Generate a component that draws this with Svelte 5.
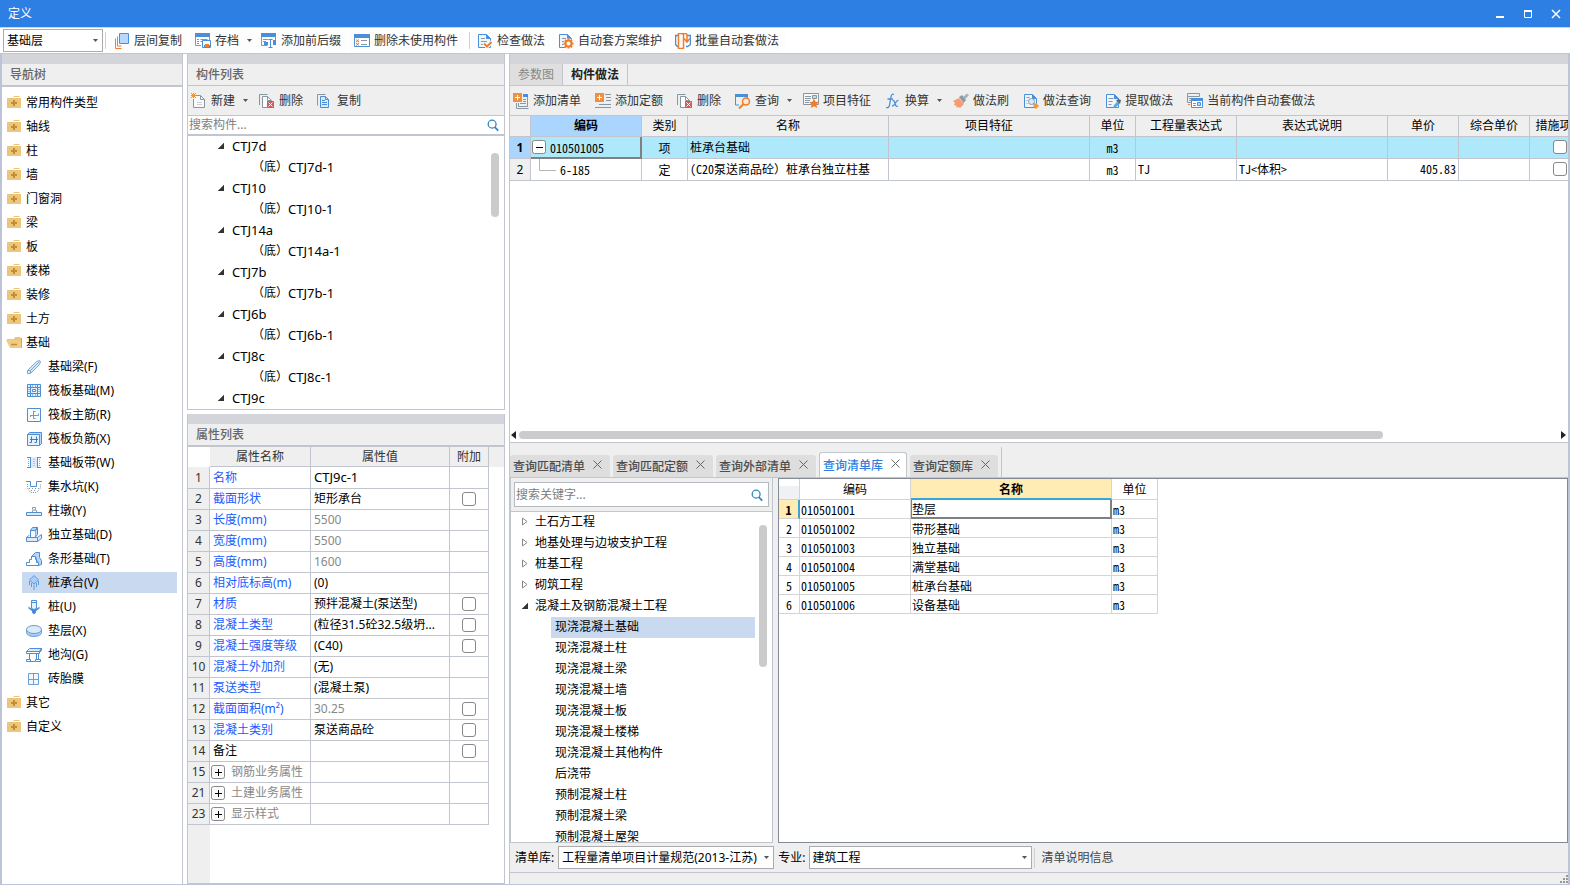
<script>
  const B = '#4a8fd8';
  const G = '#8797a2';
  const O = '#f07d2b';
  const doc = (c, x = 1.5) => `<path d="M${x} 1.5h8l4 4v9h-12z" fill="#eef5fd" stroke="${c}"/><path d="M${x + 8} 1.5v4h4" fill="${c}" stroke="${c}"/>`;
  const redX = '<path d="M8 8h7v7H8z" fill="#d9585a"/><path d="M9.5 9.5l4 4M13.5 9.5l-4 4" stroke="#fff"/>';
  const plusBox = '<path d="M0 0h9v9H0z" fill="#ef8f3f"/><path d="M2 4.5h5M4.5 2v5" stroke="#fff"/>';

  const icons = {
    layers: `<path d="M1.500 5.500v10h6M3.500 3.500v9.500h4" fill="none" stroke="${O}"/><path d="M5.500.5h9v10h-9z" fill="#b8d8ff" stroke="${B}"/>`,
    archive: `<path d="M.5 4v8.500H6" fill="none" stroke="${G}"/><path d="M0 0h15v4H0z" fill="${B}"/><path d="M14.500 4v3" stroke="${G}"/><path d="M2 6.500h2M5.500 6.500h7M2 8.500h2M5.500 8.500h2M2 10.500h2" stroke="${G}"/><path d="M7.500 7.500h8v7h-8z" fill="#fff" stroke="${B}"/><path d="M9 12h2v3H9zM13 12h2v3h-2z" fill="${B}"/><path d="M10 11h4v3h-4z" fill="${O}"/>`,
    affix: `<path d="M0 0h15v4H0z" fill="${B}"/><path d="M.5 4v8.500h6M14.500 4v4" fill="none" stroke="${G}"/><path d="M2 6.500h5M2 8.500h3" stroke="${G}"/><path d="M3 9h4v3H3zM12 7h3v5h-3z" fill="${B}"/><path d="M7.500 6.500h4M9.500 6.500v8M7.500 14.500h4" stroke="${B}"/>`,
    listx: `<path d="M.5 1.500h15v12H.5z" fill="#fff" stroke="${B}"/><path d="M0 1h16v4H0z" fill="${B}"/><path d="M2 6.500l3 2.500M5 6.500L2 9M2 10l3 2.500M5 10l-3 2.500" stroke="${O}"/><path d="M7 7.500h6M7 11.500h6" stroke="${G}"/>`,
    check: `${doc(B)}<path d="M4 5.500h4M4 8.500h6M4 11.500h3" stroke="${G}"/><path d="M7 10l3 3.500L15 9" fill="none" stroke="#fff" stroke-width="4"/><path d="M7 10.500l3 3L14.500 9" fill="none" stroke="${O}" stroke-width="2"/>`,
    gear: `${doc(B)}<path d="M4 5.500h4M4 8.500h3M4 11.500h2" stroke="${G}"/><circle cx="10.500" cy="10.500" r="5" fill="#fff"/><circle cx="10.500" cy="10.500" r="3" fill="none" stroke="${O}" stroke-width="2"/><path d="M10.500 5.500v2M10.500 13.500v2M5.500 10.500h2M13.500 10.500h2M7 7l1.500 1.500M12.500 12.500L14 14M14 7l-1.500 1.500M8.500 12.500L7 14" stroke="${O}" stroke-width="2"/>`,
    batch: `<path d="M4 2.500H.5v9l2 2H4M12 2.500h3.500v9l-3 2H11" fill="none" stroke="${B}" stroke-width="1.500"/><path d="M3.500 15.500V.5h5v15z" fill="#fff" stroke="${O}" stroke-width="1.500"/><path d="M6 .5h4.500q1.500 0 1.500 2V8M9 5.500L12 9l3-3.500" fill="none" stroke="${O}" stroke-width="1.500"/>`,
    create: `<path d="M3.500 2.500h6l4 4v8h-11V6" fill="#fafafa" stroke="${G}"/><path d="M9.500 2.500v4h4" fill="none" stroke="${G}"/><path d="M6 9.500h5M6 11.500h5" stroke="#c9d0d5"/><path d="M0 0l5 5M5 0L0 5M2.500 0v5M0 2.500h5" stroke="#f0992b"/>`,
    remove: `<path d="M.5 12V1.500h8" fill="none" stroke="${G}"/><path d="M3.500 3.500h5l4 4v7h-9z" fill="#fff" stroke="${G}"/><path d="M8.500 3.500v4h4" fill="none" stroke="${G}"/>${redX}`,
    copy: `<path d="M.5 12.500V1.500h8" fill="none" stroke="${G}"/><path d="M3.500 3.500h5l3 3v8h-8z" fill="#dbeafb" stroke="${B}"/><path d="M8.500 3.500v3h3" fill="none" stroke="${B}"/><path d="M5 7.500h3M5 9.500h5M5 11.500h5" stroke="${B}"/>`,
    addlist: `<path d="M10 1h5v3h-5z" fill="${B}"/><path d="M14.500 4v9.500M3.500 10v5.500h12M5.500 10v3.500h9" fill="none" stroke="${G}"/><path d="M10 6.500h3M10 8.500h3M7 10.500h6" stroke="${G}"/>${plusBox}`,
    addquota: `<path d="M10 1.500h6M11 4.500h5M11 7.500h5M4 11.500h12M0 14.500h16" stroke="${G}"/>${plusBox}`,
    query: `<path d="M4 12H.5V2M0 2h13M12.500 1v4" fill="none" stroke="${B}"/><path d="M0 1h13v3H0z" fill="${B}"/><circle cx="11" cy="8.500" r="3.500" fill="#fde8d6" stroke="${O}" stroke-width="1.500"/><path d="M8.500 11L4 15.500" stroke="${O}" stroke-width="2"/>`,
    feature: `<path d="M.5.5h15v11H.5z" fill="#f8f8f8" stroke="${G}"/><path d="M2 3.500h6M2 5.500h6M2 7.500h5M2 9.500h4" stroke="${G}"/><path d="M9.500 2.500h4v3h-4z" fill="#cfd6db" stroke="${G}"/><path d="M11 5.500l1.500 3.200 3.500.4-2.600 2.300.7 3.600-3.100-1.800-3.100 1.800.7-3.600L6 9.100l3.500-.4z" fill="${O}"/>`,
    fx: `<path d="M9 1.500Q6.500 0 6 4L4.500 12Q4 15.500 1 14.500M2.500 6H8" fill="none" stroke="${B}" stroke-width="1.300"/><path d="M7.500 7.500Q9 7 9.500 9l1 3q.7 2 2.500 1M13.500 7.500Q12 7 10.500 10T7 13" fill="none" stroke="${B}" stroke-width="1.300"/>`,
    brush: `<path d="M0 8l6-3 5 6-4 4-2-1-1.500 1v-2L1 12l1-2z" fill="#f79c72"/><path d="M6 4l3-2 4 5-2.500 3z" fill="#8d9aa3"/><path d="M10 4l4-3.500L16 2l-3.500 4z" fill="#a9b3ba"/>`,
    docquery: `${doc(B)}<path d="M3.500 4.500h3M3.500 7.500h1M3.500 10.500h1" stroke="${G}"/><circle cx="8.500" cy="8.500" r="3" fill="#dbeafb" stroke="${G}"/><path d="M10.500 10.500l2 2" stroke="${G}" stroke-width="1.500"/><path d="M13 10l3 3-3 3-3-3z" fill="#f39a2e"/>`,
    extract: `${doc(B)}<path d="M3.500 5.500h5M3.500 8.500h4M3.500 11.500h3" stroke="${G}"/><path d="M8 15l1-3 4-4 2 2-4 4z" fill="#5aa9d8"/><path d="M11 8l2-2 3 1-1 4-2-2z" fill="#5c6870"/>`,
    current: `<path d="M.5.5h12v3H.5zM.5 3.500v6H4M2 5.500h2M2 7.500h2" fill="none" stroke="${G}"/><path d="M4.500 5.500h11v9h-11z" fill="#fff" stroke="${B}"/><path d="M4 5h12v3H4z" fill="${B}"/><path d="M6 10.500h3M6 12.500h3" stroke="${G}"/><path d="M10.500 9.500h3v3h-3z" fill="#b8d8ff" stroke="${B}"/><path d="M1 11.500h2" stroke="${O}"/>`,
    folder: `<path d="M8 1h5l1 1H7z" fill="#edc67c"/><path d="M1 3h14v10H1z" fill="#edc67c"/><path d="M5 8h6M8 5v6" stroke="#c18f3a" stroke-width="2"/>`,
    open: `<path d="M9 2h5l1 1v7l-2-4H5l-4 0V4h7z" fill="#edc67c"/><path d="M0 5h13l3 8H4z" fill="#f0cb85"/><path d="M15.500 3v10" stroke="#dba84e"/><path d="M5 9.500h6" stroke="#c18f3a" stroke-width="1.500"/>`,
    beam: `<path d="M1.500 11.500l9-9 3-1 1 1-1 3-9 9h-3z" fill="#d6e7fa" stroke="#7aa9dc"/><path d="M1.500 11.500h3v3M4.500 11.500l9-9" fill="none" stroke="#7aa9dc"/>`,
    raft: `<path d="M1.500 1.500h13v12h-13z" fill="#e3effc" stroke="${B}"/><path d="M4.500 2v11M11.500 2v11M2 4.500h12M2 10.500h12" stroke="${B}"/><path d="M6.500 6.500h3v2h-3z" fill="#fff" stroke="${B}"/><path d="M6.500 2v2M9.500 2v2M6.500 11v2M9.500 11v2M2 6.500h2M2 8.500h2M12 6.500h2M12 8.500h2" stroke="#8db8e8"/>`,
    rebar: `<path d="M1.500 1.500h13v13h-13z" fill="#f7fbff" stroke="${B}"/><path d="M4 8.500h8.500M4.500 8v2M12.500 6.500v2M7.500 4.500h2M7.500 4v7.500h2" fill="none" stroke="${G}"/>`,
    negbar: `<path d="M1.500 3.500l2-2h12v11l-2 2" fill="#bcd8f6" stroke="${B}"/><path d="M1.500 3.500h12v11h-12z" fill="#e6f1fd" stroke="${B}"/><path d="M5.500 5.500v6h-2M10.500 5.500v6h-2M4 8.500h8" fill="none" stroke="#3a7cc4"/>`,
    strip: `<path d="M5 2h6v11H5z" fill="#dceafa"/><path d="M1 2.500h4M1 12.500h4M11 2.500h4M11 12.500h4M4.500 2v11M11.500 2v11" stroke="${B}"/><path d="M2.500 4v8M8 4v8M13.500 4v8" stroke="#8aa9c8" stroke-dasharray="1 1"/>`,
    pit: `<path d="M0 2.500h4.500v5h6v-5H16" fill="none" stroke="${B}"/><path d="M1.500 5v4l3 4.500h6l4-4.500V5" fill="none" stroke="${G}" stroke-dasharray="1 1"/><path d="M3 9.500h10M5 11.500h6" stroke="${G}" stroke-dasharray="1 2"/>`,
    pier: `<path d="M.5 9.500h15v3H.5z" fill="#dceafa" stroke="${B}"/><path d="M6 9.500l1-2.500h3l1 2.500M6.500 6.500v-2h3v2" fill="none" stroke="${G}"/>`,
    footing: `<path d="M.5 10.500h11v4H.5zM.5 10.500l3-2.500M11.500 10.500l4-3v4l-4 3" fill="#dceafa" stroke="${B}"/><path d="M4.500 10.500v-7h5v7z" fill="#f3f8fe" stroke="${B}"/><path d="M4.500 3.500l2-3h5l-2 3zM9.500 3.500l2-3v7l-2 2.500" fill="#b9d5f4" stroke="${B}"/>`,
    stripfoot: `<path d="M5.500 5.500l4-4h4v5l2 3v4l-3 1-3-9z" fill="#b9d5f4" stroke="${B}"/><path d="M.5 14.500v-3h3v-3h2v-3h4v3h1v3h2v3z" fill="#fff" stroke="${B}"/>`,
    pilecap: `<path d="M8 .5L3.500 5 8 9l4.500-4z" fill="#a9cff8" stroke="#5b9ae0"/><path d="M3.500 6v4M5.500 8v4M8 9.500v5.500M10.500 8v4M12.500 6v4" fill="none" stroke="#5b9ae0"/>`,
    pile: `<path d="M2.500 7.500L5 9.500h6l2.500-2v2L10 12v1.500L8 15.500l-2-2V12l-3.500-2.500z" fill="#3f8be0"/><path d="M5.500 1.500h5v8l-2.500 1-2.500-1z" fill="#e6f1fd" stroke="${B}"/><path d="M5.500 3.500h5" stroke="${B}"/>`,
    cushion: `<path d="M.5 6v3.500c0 2.300 3.300 4 7.500 4s7.500-1.700 7.500-4V6" fill="#a9cbef" stroke="#6b9fd8"/><ellipse cx="8" cy="6.500" rx="7.500" ry="4" fill="#dbe9f9" stroke="#6b9fd8"/>`,
    trench: `<path d="M.5 4.500l3-3h12l-2 3zM13.500 4.500l2-3v2l-2 2" fill="#dceafa" stroke="${B}"/><path d="M.5 4.500h13v2H.5zM3.500 6.500v6M10.500 6.500v6M12.500 6.500v6M.5 12.500h4v2h-4zM9.500 12.500h5v2h-5zM4 14.500h5" fill="none" stroke="${B}"/>`,
    mould: `<path d="M2.500 2.500h10v11h-10z" fill="#f3f8fe" stroke="#6b9fd8"/><path d="M7.500 3v10M3 8.500h9" stroke="#6b9fd8"/>`,
    search: `<circle cx="7" cy="7" r="4.500" fill="none" stroke="#2f86bd" stroke-width="1.500"/><path d="M10 10.500l4 4" stroke="#2f86bd" stroke-width="2"/>`
  };

  const mainTools = [
    { icon: 'layers', text: '层间复制' },
    { icon: 'archive', text: '存档', drop: true },
    { icon: 'affix', text: '添加前后缀' },
    { icon: 'listx', text: '删除未使用构件', sep: true },
    { icon: 'check', text: '检查做法' },
    { icon: 'gear', text: '自动套方案维护' },
    { icon: 'batch', text: '批量自动套做法' }
  ];
  const listTools = [
    { icon: 'create', text: '新建', drop: true },
    { icon: 'remove', text: '删除' },
    { icon: 'copy', text: '复制' }
  ];
  const methodTools = [
    { icon: 'addlist', text: '添加清单' },
    { icon: 'addquota', text: '添加定额' },
    { icon: 'remove', text: '删除' },
    { icon: 'query', text: '查询', drop: true },
    { icon: 'feature', text: '项目特征' },
    { icon: 'fx', text: '换算', drop: true },
    { icon: 'brush', text: '做法刷' },
    { icon: 'docquery', text: '做法查询' },
    { icon: 'extract', text: '提取做法' },
    { icon: 'current', text: '当前构件自动套做法' }
  ];

  const nav = [
    ...['常用构件类型', '轴线', '柱', '墙', '门窗洞', '梁', '板', '楼梯', '装修', '土方'].map((text) => ({ icon: 'folder', text })),
    { icon: 'open', text: '基础' },
    ...[
      ['beam', '基础梁(F)'], ['raft', '筏板基础(M)'], ['rebar', '筏板主筋(R)'], ['negbar', '筏板负筋(X)'],
      ['strip', '基础板带(W)'], ['pit', '集水坑(K)'], ['pier', '柱墩(Y)'], ['footing', '独立基础(D)'],
      ['stripfoot', '条形基础(T)'], ['pilecap', '桩承台(V)'], ['pile', '桩(U)'], ['cushion', '垫层(X)'],
      ['trench', '地沟(G)'], ['mould', '砖胎膜']
    ].map(([icon, text]) => ({ icon, text, child: true })),
    { icon: 'folder', text: '其它' },
    { icon: 'folder', text: '自定义' }
  ];
  let navSelected = $state('桩承台(V)');

  const components = ['CTJ7d', 'CTJ10', 'CTJ14a', 'CTJ7b', 'CTJ6b', 'CTJ8c', 'CTJ9c'];

  const props = [
    { n: 1, name: '名称', value: 'CTJ9c-1', latin: true },
    { n: 2, name: '截面形状', value: '矩形承台', box: true },
    { n: 3, name: '长度(mm)', value: '5500', dim: true },
    { n: 4, name: '宽度(mm)', value: '5500', dim: true },
    { n: 5, name: '高度(mm)', value: '1600', dim: true },
    { n: 6, name: '相对底标高(m)', value: '(0)' },
    { n: 7, name: '材质', value: '预拌混凝土(泵送型)', box: true },
    { n: 8, name: '混凝土类型', value: '(粒径31.5砼32.5级坍...', box: true },
    { n: 9, name: '混凝土强度等级', value: '(C40)', box: true },
    { n: 10, name: '混凝土外加剂', value: '(无)' },
    { n: 11, name: '泵送类型', value: '(混凝土泵)' },
    { n: 12, name: '截面面积(m²)', value: '30.25', dim: true, box: true },
    { n: 13, name: '混凝土类别', value: '泵送商品砼', box: true },
    { n: 14, name: '备注', value: '', box: true, plain: true },
    { n: 15, name: '钢筋业务属性', value: '', group: true },
    { n: 21, name: '土建业务属性', value: '', group: true },
    { n: 23, name: '显示样式', value: '', group: true }
  ];

  const methodCols = ['编码', '类别', '名称', '项目特征', '单位', '工程量表达式', '表达式说明', '单价', '综合单价', '措施项目'];

  const queryTabs = ['查询匹配清单', '查询匹配定额', '查询外部清单', '查询清单库', '查询定额库'];
  let queryTab = $state('查询清单库');

  const chapters = ['土石方工程', '地基处理与边坡支护工程', '桩基工程', '砌筑工程'];
  const sections = ['现浇混凝土基础', '现浇混凝土柱', '现浇混凝土梁', '现浇混凝土墙', '现浇混凝土板', '现浇混凝土楼梯', '现浇混凝土其他构件', '后浇带', '预制混凝土柱', '预制混凝土梁', '预制混凝土屋架'];
  let section = $state('现浇混凝土基础');

  const items = ['垫层', '带形基础', '独立基础', '满堂基础', '桩承台基础', '设备基础'];
</script>

{#snippet icon(name)}
  <svg class="icon" width="16" height="16" viewBox="0 0 16 16" aria-hidden="true">{@html icons[name]}</svg>
{/snippet}

{#snippet caret()}
  <svg class="caret" width="5" height="3" viewBox="0 0 5 3" aria-hidden="true"><path d="M0 0h5L2.500 3z" fill="#555" /></svg>
{/snippet}

{#snippet tools(list)}
  {#each list as t}
    <button class="tool" class:drop={t.drop}>
      {@render icon(t.icon)}<span>{t.text}</span>
      {#if t.drop}{@render caret()}{/if}
    </button>
    {#if t.sep}<span class="sep"></span>{/if}
  {/each}
{/snippet}

{#snippet expanded()}
  <svg class="twist" width="6" height="6" viewBox="0 0 6 6" aria-hidden="true"><path d="M6 0v6H0z" fill="#333" stroke="#333" stroke-width=".5" /></svg>
{/snippet}

<div class="window">
  <header class="titlebar">
    <span>定义</span>
    <div class="winbtns">
      <button aria-label="最小化"><svg width="10" height="10" viewBox="0 0 10 10"><path d="M1 8h8" stroke="#fff" stroke-width="2" /></svg></button>
      <button aria-label="最大化"><svg width="10" height="10" viewBox="0 0 10 10"><path d="M1.500 2v6.500h7V2M1 2.500h8" fill="none" stroke="#fff" /><path d="M1 2h8" stroke="#fff" stroke-width="2" /></svg></button>
      <button aria-label="关闭"><svg width="10" height="10" viewBox="0 0 10 10"><path d="M1 1l8 8M9 1L1 9" stroke="#fff" stroke-width="1.500" /></svg></button>
    </div>
  </header>

  <div class="maintools">
    <span class="combo floor">
      <select aria-label="楼层"><option>基础层</option></select>{@render caret()}
    </span>
    <span class="sep"></span>
    {@render tools(mainTools)}
  </div>

  <main>
    <section class="panel nav">
      <div class="band"></div>
      <h2>导航树</h2>
      <ul class="navtree">
        {#each nav as item}
          <li class:child={item.child}>
            <button class:selected={navSelected === item.text} onclick={() => (navSelected = item.text)}>
              {@render icon(item.icon)}<span>{item.text}</span>
            </button>
          </li>
        {/each}
      </ul>
    </section>

    <div class="middle">
      <section class="panel">
        <div class="band"></div>
        <h2 class="thin">构件列表</h2>
        <div class="toolbar">{@render tools(listTools)}</div>
        <label class="search">
          <input type="text" placeholder="搜索构件..." aria-label="搜索构件" />
          {@render icon('search')}
        </label>
        <div class="scrollbox">
          <ul class="comptree">
            {#each components as c, i}
              <li><button>{@render expanded()}<span class="latin">{c}</span></button></li>
              {#if i < components.length - 1}
                <li class="leaf"><button>（底）<span class="latin">{c}-1</span></button></li>
              {/if}
            {/each}
          </ul>
          <span class="vbar comp"></span>
        </div>
      </section>

      <section class="panel">
        <div class="band"></div>
        <h2>属性列表</h2>
        <div class="propbox">
          <table class="props">
            <thead>
              <tr><th class="num"></th><th class="pname">属性名称</th><th class="pvalue">属性值</th><th class="pbox">附加</th><th class="fill"></th></tr>
            </thead>
            <tbody>
              {#each props as p}
                <tr>
                  <td class="num">{p.n}</td>
                  <td class="key" class:plain={p.plain} class:group={p.group}>
                    {#if p.group}
                      <span class="keyrow">
                        <button class="expander" aria-label="展开">
                          <svg width="14" height="14" viewBox="0 0 14 14"><rect x=".5" y=".5" width="13" height="13" rx="2" fill="#fafafa" stroke="#888" /><path d="M4 7.500h7M7.500 4v7" stroke="#000" /></svg>
                        </button>
                        <span>{p.name}</span>
                      </span>
                    {:else}{p.name}{/if}
                  </td>
                  <td class:dim={p.dim}><span class:latin={p.latin}>{p.value}</span></td>
                  <td class="mid">{#if p.box}<input type="checkbox" aria-label={p.name} />{/if}</td>
                  <td class="fill"></td>
                </tr>
              {/each}
            </tbody>
          </table>
          <div class="gutter"></div>
        </div>
      </section>
    </div>

    <div class="right">
      <section class="methods">
        <div class="band"></div>
        <div class="pagetabs">
          <button>参数图</button>
          <button class="active">构件做法</button>
        </div>
        <div class="toolbar wide">{@render tools(methodTools)}</div>
        <div class="gridbox">
          <table class="grid">
            <colgroup>
              <col style="width:21px" /><col style="width:111px" /><col style="width:46px" /><col style="width:201px" /><col style="width:201px" /><col style="width:46px" /><col style="width:101px" /><col style="width:151px" /><col style="width:71px" /><col style="width:71px" /><col style="width:60px" />
            </colgroup>
            <thead>
              <tr><th></th>{#each methodCols as c, i}<th class:current={i === 0}>{c}</th>{/each}</tr>
            </thead>
            <tbody>
              <tr class="sel">
                <td class="num">1</td>
                <td class="code focus">
                  <span class="coderow">
                    <button class="expander" aria-label="折叠">
                      <svg width="14" height="14" viewBox="0 0 14 14"><rect x=".5" y=".5" width="13" height="13" rx="2" fill="#fff" stroke="#888" /><path d="M4 7.500h7" stroke="#000" /></svg>
                    </button>
                    <span>010501005</span>
                  </span>
                </td>
                <td class="mid">项</td><td>桩承台基础</td><td></td><td class="mid">m3</td><td></td><td></td><td></td><td></td>
                <td class="mid"><input type="checkbox" aria-label="措施项目 1" /></td>
              </tr>
              <tr>
                <td class="num">2</td>
                <td class="code">
                  <span class="coderow">
                    <svg width="24" height="21" viewBox="0 0 24 21" aria-hidden="true"><path d="M7.500 0v11.500H24" fill="none" stroke="#b5b5b5" /></svg>
                    <span>6-185</span>
                  </span>
                </td>
                <td class="mid">定</td><td>(C20泵送商品砼）桩承台独立柱基</td><td></td><td class="mid">m3</td><td>TJ</td><td>TJ&lt;体积&gt;</td><td class="end">405.83</td><td></td>
                <td class="mid"><input type="checkbox" aria-label="措施项目 2" /></td>
              </tr>
            </tbody>
          </table>
        </div>
        <div class="hscroll">
          <svg width="5" height="8" viewBox="0 0 5 8" aria-hidden="true"><path d="M5 0v8L0 4z" fill="#222" /></svg>
          <div class="track"><span></span></div>
          <svg width="5" height="8" viewBox="0 0 5 8" aria-hidden="true"><path d="M0 0v8l5-4z" fill="#222" /></svg>
        </div>
      </section>

      <section class="queries">
        <div class="qtabs">
          {#each queryTabs as t}
            <div class="qtab" class:active={queryTab === t}>
              <button class="label" onclick={() => (queryTab = t)}>{t}</button>
              <button class="close" aria-label="关闭{t}">
                <svg width="9" height="9" viewBox="0 0 9 9"><path d="M.5.5l8 8M8.500.5l-8 8" stroke="#666" /></svg>
              </button>
            </div>
          {/each}
          <span class="tabend"></span>
        </div>
        <div class="qbody">
          <div class="library">
            <div class="searchwrap">
              <label class="search boxed">
                <input type="text" placeholder="搜索关键字..." aria-label="搜索关键字" />
                {@render icon('search')}
              </label>
            </div>
            <div class="scrollbox">
              <ul class="libtree">
                {#each chapters as c}
                  <li><button>
                    <svg class="twist" width="6" height="9" viewBox="0 0 6 9" aria-hidden="true"><path d="M.5 1v7l4.500-3.500z" fill="#fff" stroke="#888" /></svg>
                    <span>{c}</span>
                  </button></li>
                {/each}
                <li><button>{@render expanded()}<span>混凝土及钢筋混凝土工程</span></button></li>
                {#each sections as s}
                  <li class="leaf"><button class:selected={section === s} onclick={() => (section = s)}>{s}</button></li>
                {/each}
              </ul>
              <span class="vbar lib"></span>
            </div>
          </div>
          <div class="results">
            <table>
              <thead>
                <tr><th class="corner"></th><th class="rcode">编码</th><th class="rname">名称</th><th class="runit">单位</th></tr>
              </thead>
              <tbody>
                {#each items as name, i}
                  <tr class:first={i === 0}>
                    <td class="num">{i + 1}</td><td>01050100{i + 1}</td><td class="item">{name}</td><td>m3</td>
                  </tr>
                {/each}
              </tbody>
            </table>
          </div>
        </div>
        <footer>
          <label for="lib">清单库:</label>
          <span class="combo lib">
            <select id="lib"><option>工程量清单项目计量规范(2013-江苏)</option></select>{@render caret()}
          </span>
          <label for="major">专业:</label>
          <span class="combo major">
            <select id="major"><option>建筑工程</option></select>{@render caret()}
          </span>
          <span class="sep"></span>
          <button class="info">清单说明信息</button>
        </footer>
        <div class="status">
          <svg width="9" height="9" viewBox="0 0 9 9" aria-hidden="true"><path d="M7 1h2M4 4h2M7 4h2M1 7h2M4 7h2M7 7h2" stroke="#999" stroke-width="2" /></svg>
        </div>
      </section>
    </div>
  </main>
</div>

<style>
  :global(body) { margin: 0; }
  .window {
    --line: #c1c5cd;
    --edge: #bcc5d8;
    --face: #efefef;
    --pick: #c9d9f0;
    --mono: "Noto Sans Mono CJK SC", "Liberation Mono", "Noto Sans CJK SC", monospace;
    display: flex;
    flex-direction: column;
    height: 100vh;
    box-sizing: border-box;
    font: 12px/20px "Noto Sans", "Noto Sans CJK SC", sans-serif;
    color: #000;
    background: #fff;
    overflow: hidden;
  }
  .window *, .window *::before { box-sizing: border-box; }
  button {
    margin: 0;
    padding: 0;
    border: 0;
    background: none;
    font: inherit;
    color: inherit;
    white-space: nowrap;
  }
  ul { list-style: none; margin: 0; padding: 0; }
  h2 { margin: 0; font-weight: 500; font-size: 12px; }
  svg { display: block; flex: none; }

  .titlebar {
    display: flex;
    align-items: center;
    justify-content: space-between;
    height: 27px;
    flex: none;
    padding: 0 9px 0 8px;
    color: #fff;
    background: #2d7fe3;
  }
  .winbtns { display: flex; gap: 18px; }
  .winbtns button { display: grid; place-items: center; width: 10px; height: 20px; }

  .maintools {
    display: flex;
    align-items: center;
    gap: 1px;
    flex: none;
    height: 27px;
    padding-left: 3px;
    border-top: 1px solid #c9d6e8;
    border-bottom: 1px solid var(--line);
    background: #fff;
  }
  .sep { width: 1px; height: 17px; margin: 0 1px; background: #cfcfcf; }
  .maintools .sep ~ .sep { margin: 0 0 0 4px; }
  .tool { display: flex; align-items: center; gap: 4px; height: 22px; padding: 0 6px; color: #333; }
  .maintools .tool { border-radius: 4px; background: #fdfdfd; }
  .tool.drop { padding-right: 2px; }
  .tool .caret { margin-left: 4px; }
  .combo {
    position: relative;
    display: flex;
    align-items: center;
    height: 23px;
    border: 1px solid #ababab;
    background: #fff;
  }
  .combo select {
    appearance: none;
    width: 100%;
    height: 100%;
    padding: 0 14px 0 3px;
    border: 0;
    font: inherit;
    color: #000;
    background: transparent;
  }
  .combo .caret { position: absolute; right: 4px; pointer-events: none; }
  .floor { width: 100px; }

  main { display: flex; flex: 1; min-height: 0; gap: 4px; border-left: 2px solid var(--edge); border-right: 2px solid var(--edge); border-bottom: 1px solid var(--edge); }
  .panel { display: flex; flex-direction: column; min-height: 0; border: 1px solid var(--line); border-top: 0; background: #fff; }
  .band { height: 10px; flex: none; background: #d4d5db; }
  h2 { flex: none; height: 23px; padding-left: 8px; line-height: 22px; color: #666; background: var(--face); border-bottom: 2px solid var(--line); }
  h2.thin { height: 22px; border-bottom-width: 1px; }
  .nav { width: 181px; flex: none; border-left: 0; border-bottom: 0; }
  .navtree { padding-top: 4px; overflow: hidden; }
  .navtree li { height: 24px; padding: 1px 5px 0 0; }
  .navtree button { display: flex; align-items: center; gap: 4px; width: 100%; height: 21px; padding-left: 4px; }
  .navtree .child { padding-left: 20px; }
  .navtree .child button { gap: 6px; }
  .selected { background: var(--pick); }

  .middle { display: grid; grid-template-rows: 356fr 470fr; gap: 4px; width: 318px; flex: none; }
  .toolbar { display: flex; align-items: center; gap: 2px; flex: none; height: 30px; background: var(--face); border-bottom: 1px solid var(--line); }
  .toolbar .tool:first-child { padding-left: 3px; }
  .toolbar .drop { padding-right: 3px; }
  .search { display: flex; align-items: center; flex: none; height: 20px; padding-right: 3px; border-bottom: 2px solid var(--line); background: #fff; }
  .search input { flex: 1; min-width: 0; height: 17px; padding: 0 0 0 1px; border: 0; outline: 0; font: inherit; background: none; }
  .search input::placeholder { color: #808080; opacity: 1; }
  .search .icon { width: 14px; height: 14px; margin-right: 1px; }
  .scrollbox { position: relative; flex: 1; min-height: 0; overflow: hidden; background: #fff; }
  .comptree li, .libtree li { height: 21px; }
  .comptree button, .libtree button { display: flex; align-items: center; height: 21px; padding-bottom: 2px; }
  .comptree button { padding-left: 30px; }
  .comptree .twist { margin-right: 8px; }
  .comptree .leaf button { padding-left: 64px; }
  .latin { font-size: 13px; }
  .vbar { position: absolute; width: 8px; border-radius: 4px; background: #cbcbcb; }
  .vbar.comp { right: 5px; top: 17px; height: 64px; }
  .vbar.lib { right: 5px; top: 13px; height: 142px; }

  .propbox { display: flex; flex-direction: column; flex: 1; min-height: 0; overflow: hidden; }
  .gutter { flex: 1; width: 22px; background: var(--face); }
  table { border-collapse: separate; border-spacing: 0; table-layout: fixed; }
  th, td { padding: 0 2px 0 3px; font-weight: 400; white-space: nowrap; overflow: hidden; text-align: left; }
  th { text-align: center; padding: 0; }
  .props { width: 100%; flex: none; }
  .props th { height: 20px; line-height: 19px; color: #333; background: var(--face); border-right: 1px solid var(--line); border-bottom: 1px solid var(--line); }
  .props th.num { width: 22px; background: #fff; border: 0; }
  .props th.pname { width: 101px; }
  .props th.pvalue { width: 139px; }
  .props th.pbox { width: 39px; }
  .props .fill, .props th.fill { border: 0; }
  .props td { height: 21px; line-height: 20px; border-right: 1px solid var(--line); border-bottom: 1px solid var(--line); }
  .props td.num { padding: 0; text-align: center; color: #333; background: var(--face); }
  .props .key { color: #1a5cff; }
  .props .key.plain { color: #000; }
  .props .key.group { color: #888; padding-left: 1px; }
  .keyrow { display: flex; align-items: center; gap: 6px; height: 20px; }
  .props .dim { color: #888; }
  .props td.mid, .grid td.mid { padding: 0; text-align: center; }
  input[type="checkbox"] { appearance: none; display: block; width: 14px; height: 14px; margin: 0 auto; border: 1px solid #888; border-radius: 3px; background: #fff; }
  .props td.mid, .grid td.mid { padding-bottom: 1px; }

  .right { display: grid; grid-template-rows: 389fr 441fr; flex: 1; min-width: 0; border-left: 1px solid var(--line); }
  .methods { display: flex; flex-direction: column; min-width: 0; min-height: 0; border-bottom: 1px solid var(--line); }
  .pagetabs { display: flex; flex: none; height: 22px; background: var(--face); border-bottom: 1px solid var(--line); }
  .pagetabs button { padding: 0 8px; color: #888; background: #dfdfdf; border-right: 1px solid var(--line); }
  .pagetabs .active { color: #222; font-weight: 700; background: var(--face); }
  .gridbox { flex: 1; min-height: 0; overflow: hidden; }
  .grid { width: 1080px; }
  .grid th { height: 21px; line-height: 20px; background: var(--face); border-right: 1px solid var(--line); border-bottom: 1px solid var(--line); }
  .grid th.current { background: #aad5ff; font-weight: 700; }
  .grid td { height: 22px; line-height: 19px; padding: 0 2px 2px; font-family: var(--mono); border-right: 1px solid var(--line); border-bottom: 1px solid var(--line); }
  .grid td.num { padding: 0; text-align: center; font-family: "Noto Sans", sans-serif; background: var(--face); }
  .grid td.code { padding: 0 0 0 1px; }
  .grid td.end { text-align: right; }
  .grid .sel td { background: #aee9fb; }
  .grid .sel td.num { background: #aad5ff; font-weight: 700; }
  .grid .sel td.focus { border-right: 2px solid #808080; border-bottom: 2px solid #808080; }
  .coderow { display: flex; align-items: center; gap: 4px; height: 19px; }
  .hscroll { display: flex; align-items: center; gap: 3px; flex: none; height: 15px; padding: 0 2px 0 1px; }
  .track { flex: 1; }
  .track span { display: block; width: 83.2%; height: 8px; border-radius: 4px; background: #cbcbcb; }

  .queries { display: flex; flex-direction: column; min-width: 0; min-height: 0; background: var(--face); }
  .qtabs { display: flex; align-items: flex-end; gap: 3px; flex: none; height: 35px; border-bottom: 1px solid var(--line); }
  .qtab { display: flex; align-items: center; gap: 8px; height: 22px; padding: 0 8px 0 3px; color: #4d4d4d; font-weight: 500; background: #dedede; border-radius: 3px 3px 0 0; }
  .qtab .label { padding-top: 2px; }
  .qtab .close { padding-bottom: 4px; }
  .qtab.active { height: 25px; padding: 0 6px 0 3px; color: #2d7fe3; background: #fff; border: 1px solid var(--line); border-bottom: 0; }
  .tabend { width: 1px; height: 30px; background: var(--line); }
  .qbody { display: flex; flex: 1; min-height: 0; gap: 5px; }
  .library { display: flex; flex-direction: column; width: 263px; flex: none; border: 1px solid var(--line); border-top: 0; }
  .searchwrap { flex: none; padding: 4px 3px; border-bottom: 1px solid var(--line); }
  .search.boxed { height: 25px; border: 1px solid #b5b9c0; }
  .libtree button { padding-left: 11px; }
  .libtree .twist { width: 6px; margin-right: 7px; }
  .libtree .leaf { padding: 0 17px 0 40px; }
  .libtree .leaf button { width: 100%; padding-left: 4px; }
  .results { flex: 1; min-width: 0; border: 1px solid #838a94; background: #fff; overflow: hidden; }
  .results table { width: 379px; font-family: var(--mono); }
  .results th, .results td { border-right: 1px solid #d4d4d4; border-bottom: 1px solid #d4d4d4; }
  .results th { height: 21px; line-height: 20px; }
  .results .corner { width: 21px; background: linear-gradient(#fff 35%, #f0f1f4 35%); }
  .results .rcode { width: 111px; }
  .results .rname { width: 201px; line-height: 19px; font-weight: 700; background: #ffecb5; border-bottom: 2px solid #3aa5cf; }
  .results .runit { width: 46px; }
  .results td { height: 19px; line-height: 17px; padding: 0 0 0 1px; }
  .results td.num { padding: 0; text-align: center; }
  .results .first .num { font-weight: 700; background: #ffecb5; border-right: 2px solid #3aa5cf; }
  .results .first .item { border-right: 2px solid #808080; border-bottom: 2px solid #808080; box-shadow: inset 1px 0 #808080; }

  footer { display: flex; align-items: center; flex: none; height: 30px; padding-left: 5px; border-bottom: 1px solid var(--line); }
  footer .combo { margin: 0 4px; }
  footer .combo select { padding-left: 2px; }
  footer .combo.lib { width: 216px; }
  footer .combo.major { width: 223px; margin-right: 2px; }
  footer .combo.lib select { padding-left: 3px; }
  footer .sep { height: 20px; margin: 0 6px 0 0; }
  footer .info { color: #444; }
  .status { display: flex; justify-content: flex-end; align-items: flex-end; flex: none; height: 11px; }
</style>
